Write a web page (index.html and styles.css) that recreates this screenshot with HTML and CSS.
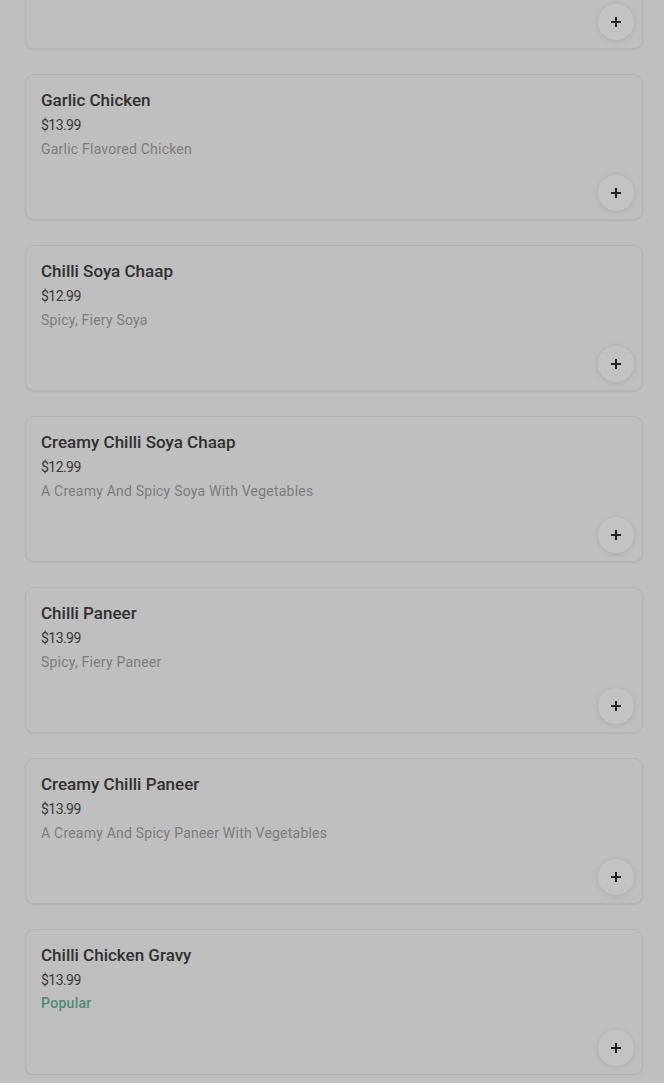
FILE: index.html
```html
<!DOCTYPE html>
<html>
<head>
<meta charset="utf-8">
<link rel="stylesheet" href="styles.css">
</head>
<body>
<div class="list">
  <div class="card">
    <div class="info"></div>
    <button class="add"><svg width="12" height="12" viewBox="0 0 12 12"><path d="M6 1v10M1 6h10" stroke="#222" stroke-width="2"/></svg></button>
  </div>
  <div class="card">
    <div class="info">
      <div class="name">Garlic Chicken</div>
      <div class="price">$13.99</div>
      <div class="desc">Garlic Flavored Chicken</div>
    </div>
    <button class="add"><svg width="12" height="12" viewBox="0 0 12 12"><path d="M6 1v10M1 6h10" stroke="#222" stroke-width="2"/></svg></button>
  </div>
  <div class="card">
    <div class="info">
      <div class="name">Chilli Soya Chaap</div>
      <div class="price">$12.99</div>
      <div class="desc">Spicy, Fiery Soya</div>
    </div>
    <button class="add"><svg width="12" height="12" viewBox="0 0 12 12"><path d="M6 1v10M1 6h10" stroke="#222" stroke-width="2"/></svg></button>
  </div>
  <div class="card">
    <div class="info">
      <div class="name">Creamy Chilli Soya Chaap</div>
      <div class="price">$12.99</div>
      <div class="desc">A Creamy And Spicy Soya With Vegetables</div>
    </div>
    <button class="add"><svg width="12" height="12" viewBox="0 0 12 12"><path d="M6 1v10M1 6h10" stroke="#222" stroke-width="2"/></svg></button>
  </div>
  <div class="card">
    <div class="info">
      <div class="name">Chilli Paneer</div>
      <div class="price">$13.99</div>
      <div class="desc">Spicy, Fiery Paneer</div>
    </div>
    <button class="add"><svg width="12" height="12" viewBox="0 0 12 12"><path d="M6 1v10M1 6h10" stroke="#222" stroke-width="2"/></svg></button>
  </div>
  <div class="card">
    <div class="info">
      <div class="name">Creamy Chilli Paneer</div>
      <div class="price">$13.99</div>
      <div class="desc">A Creamy And Spicy Paneer With Vegetables</div>
    </div>
    <button class="add"><svg width="12" height="12" viewBox="0 0 12 12"><path d="M6 1v10M1 6h10" stroke="#222" stroke-width="2"/></svg></button>
  </div>
  <div class="card">
    <div class="info">
      <div class="name">Chilli Chicken Gravy</div>
      <div class="price">$13.99</div>
      <div class="popular">Popular</div>
    </div>
    <button class="add"><svg width="12" height="12" viewBox="0 0 12 12"><path d="M6 1v10M1 6h10" stroke="#222" stroke-width="2"/></svg></button>
  </div>
</div>
</body>
</html>
```
FILE: styles.css
```css
html, body {
  margin: 0;
  padding: 0;
  background: #bfbfbf;
  font-family: Roboto, "Noto Sans", sans-serif;
  overflow: hidden;
}
.list {
  display: flex;
  flex-direction: column;
  gap: 25px;
  padding: 0 21px 0 25px;
  margin-top: -97px;
}
.card {
  height: 146px;
  box-sizing: border-box;
  border: 1px solid #b4b4b4;
  border-radius: 9px;
  box-shadow: 0 1px 2px rgba(0,0,0,0.07);
  padding: 14px 8px 8px 15px;
  display: flex;
  flex-direction: column;
  justify-content: space-between;
}
.info {
  display: flex;
  flex-direction: column;
}
.name {
  font-size: 17px;
  line-height: 22px;
  color: #303030;
  font-weight: 500;
  margin-bottom: 4px;
}
.price {
  font-size: 14px;
  line-height: 20px;
  letter-spacing: -0.55px;
  color: #383838;
  margin-bottom: 4px;
}
.desc {
  font-size: 14px;
  line-height: 20px;
  letter-spacing: 0.22px;
  color: #7c7c7c;
}
.popular {
  font-size: 14px;
  line-height: 18px;
  letter-spacing: 0.3px;
  color: #4e8a70;
  font-weight: 500;
}
.add {
  align-self: flex-end;
  width: 36px;
  height: 36px;
  border-radius: 50%;
  border: none;
  background: #c3c3c3;
  box-shadow: 0 1px 6px rgba(0,0,0,0.1);
  display: flex;
  align-items: center;
  justify-content: center;
  padding: 0;
}
```
